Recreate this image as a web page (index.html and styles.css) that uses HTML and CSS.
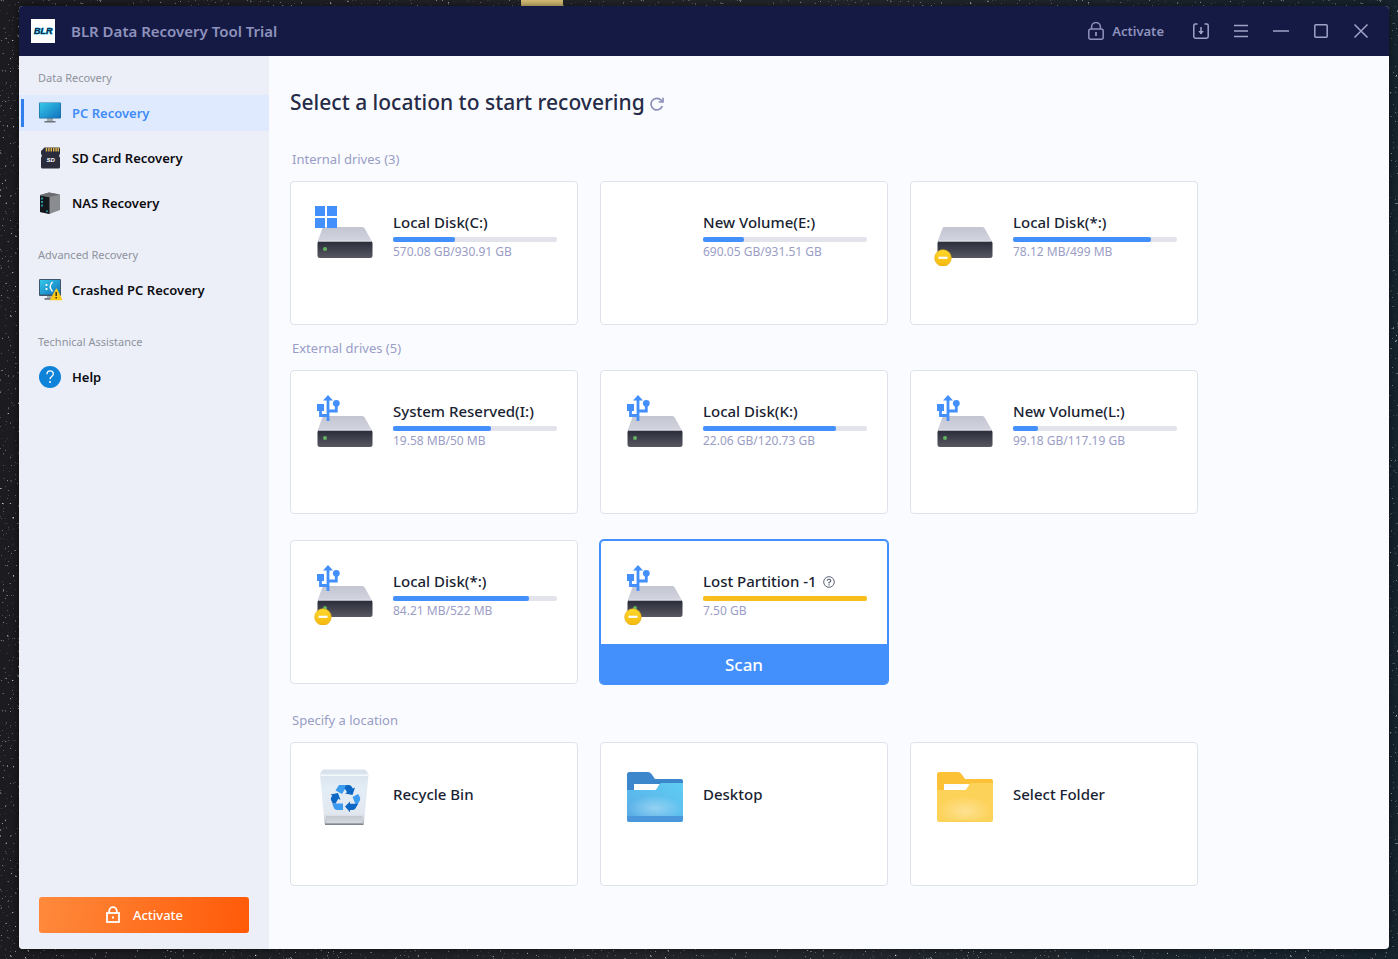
FILE: index.html
```html
<!DOCTYPE html>
<html lang="en">
<head>
    <meta charset="UTF-8">
    <meta name="viewport" content="width=device-width, initial-scale=1.0">
    <title>BLR Data Recovery Tool Trial</title>
    <link rel="stylesheet" href="styles.css">
</head>
<body>
    <!-- Desktop wallpaper -->
    <svg class="wallpaper" aria-hidden="true">
        <defs>
            <linearGradient id="sky" x1="0" y1="0" x2="1" y2="0">
                <stop offset="0" stop-color="#1c1c20"/>
                <stop offset="0.6" stop-color="#24272c"/>
                <stop offset="1" stop-color="#16232d"/>
            </linearGradient>
            <filter id="stars" x="0" y="0" width="100%" height="100%">
                <feTurbulence type="fractalNoise" baseFrequency="0.4" numOctaves="2" seed="8"/>
                <feColorMatrix values="0 0 0 0 0.7  0 0 0 0 0.72  0 0 0 0 0.76  5 0 0 0 -3.5"/>
            </filter>
        </defs>
        <rect width="100%" height="100%" fill="url(#sky)"/>
        <rect width="100%" height="100%" filter="url(#stars)"/>
        <rect x="521" width="42" height="6" fill="#dcc277"/>
    </svg>

    <!-- Shared icons -->
    <svg class="sprite" aria-hidden="true">
        <defs>
            <linearGradient id="driveTop" x1="0" y1="0" x2="0" y2="1">
                <stop offset="0" stop-color="#c3c5d1"/>
                <stop offset="1" stop-color="#d3d4df"/>
            </linearGradient>
            <linearGradient id="driveFront" x1="0" y1="0" x2="0" y2="1">
                <stop offset="0" stop-color="#292b3a"/>
                <stop offset="1" stop-color="#575861"/>
            </linearGradient>
            <linearGradient id="coin" x1="0" y1="0" x2="0" y2="1">
                <stop offset="0" stop-color="#ffd92b"/>
                <stop offset="1" stop-color="#f5b70d"/>
            </linearGradient>
            <linearGradient id="screen" x1="0" y1="0" x2="1" y2="1">
                <stop offset="0" stop-color="#35c8ea"/>
                <stop offset="1" stop-color="#1173bd"/>
            </linearGradient>
            <symbol id="drive" viewBox="0 0 64 64">
                <path d="M13.500 25h38q1.500 0 2.200 1.500L61 39.500H6.500L11.500 26.300q.5-1.300 2-1.300z" fill="url(#driveTop)"/>
                <rect x="6.500" y="39" width="55" height="17" rx="2.500" fill="url(#driveFront)"/>
                <path d="M8 39.200h52" stroke="#e8e8ee" stroke-width="1"/>
                <circle cx="14" cy="47" r="2" fill="#63b35f"/>
            </symbol>
            <symbol id="drivePlain" viewBox="0 0 64 64">
                <path d="M13.500 25h38q1.500 0 2.200 1.500L61 39.500H6.500L11.500 26.300q.5-1.300 2-1.300z" fill="url(#driveTop)"/>
                <rect x="6.500" y="39" width="55" height="17" rx="2.500" fill="url(#driveFront)"/>
                <path d="M8 39.200h52" stroke="#e8e8ee" stroke-width="1"/>
            </symbol>
            <symbol id="windows" viewBox="0 0 64 64">
                <path d="M4 4h10v10H4zM16 4h10v10H16zM4 16h10v10H4zM16 16h10v10H16z" fill="#4390fc"/>
            </symbol>
            <symbol id="usb" viewBox="0 0 64 64">
                <path d="M17 4l5 5.500H12z" fill="#4390fc"/>
                <rect x="6" y="13" width="7" height="7" fill="#4390fc"/>
                <circle cx="25.300" cy="12.300" r="3.400" fill="#4390fc"/>
                <path d="M17 8v22M9.500 19v5.500H17M25.300 14v6H17" fill="none" stroke="#4390fc" stroke-width="2.800"/>
            </symbol>
            <symbol id="minus" viewBox="0 0 64 64">
                <circle cx="12" cy="56" r="8.300" fill="url(#coin)" stroke="#e0a813" stroke-width=".6"/>
                <path d="M7.500 55.800h9" stroke="#fff" stroke-width="2.200"/>
            </symbol>
        </defs>
    </svg>

    <div class="window">
        <header class="titlebar">
            <svg class="logo" viewBox="0 0 24 24" aria-hidden="true">
                <rect width="24" height="24" fill="#fff"/>
                <text class="logo-glow" x="3" y="15">BLR</text>
                <text class="logo-text" x="3" y="15">BLR</text>
            </svg>
            <span class="app-title">BLR Data Recovery Tool Trial</span>
            <button class="activate-link" type="button">
                <svg width="16" height="18" viewBox="0 0 16 18" fill="none" stroke="currentColor" stroke-width="1.500">
                    <path d="M3.600 7V5a4.400 4.400 0 0 1 8.800 0v2"/>
                    <rect x=".8" y="7" width="14.400" height="10.200" rx="2"/>
                    <path d="M8 10v4" stroke-width="1.800"/>
                </svg>
                Activate
            </button>
            <button class="window-btn" type="button" aria-label="Import">
                <svg width="16" height="16" viewBox="0 0 16 16" fill="none" stroke="currentColor" stroke-width="1.500">
                    <path d="M4.500 1H2.300Q.8 1 .8 2.500v11q0 1.700 1.700 1.700h11q1.700 0 1.700-1.700v-11Q15.200 1 13.700 1h-2.200M8 4v7"/>
                    <path d="M5.200 8L8 11.500 10.800 8z" fill="currentColor" stroke="none"/>
                </svg>
            </button>
            <button class="window-btn" type="button" aria-label="Menu">
                <svg width="16" height="16" viewBox="0 0 16 16" fill="none" stroke="currentColor" stroke-width="1.500"><path d="M1 2.500h14M1 8h14M1 13.500h14"/></svg>
            </button>
            <button class="window-btn" type="button" aria-label="Minimize">
                <svg width="16" height="16" viewBox="0 0 16 16" fill="none" stroke="currentColor" stroke-width="1.500"><path d="M0 8h16"/></svg>
            </button>
            <button class="window-btn" type="button" aria-label="Maximize">
                <svg width="16" height="16" viewBox="0 0 16 16" fill="none" stroke="currentColor" stroke-width="1.500"><rect x="1.800" y="1.800" width="12.400" height="12.400" rx="1"/></svg>
            </button>
            <button class="window-btn" type="button" aria-label="Close">
                <svg width="16" height="16" viewBox="0 0 16 16" fill="none" stroke="currentColor" stroke-width="1.500"><path d="M1.500 1.500l13 13M14.500 1.500l-13 13"/></svg>
            </button>
        </header>

        <div class="content">
            <nav class="sidebar">
                <section class="nav-group">
                    <h2>Data Recovery</h2>
                    <a class="nav-item active" href="#">
                        <svg class="nav-icon" viewBox="0 0 22 22">
                            <path d="M8 16h6v3H8z" fill="#a3a8ae"/>
                            <path d="M5.500 19h11v1.500h-11z" fill="#6d747b"/>
                            <rect width="22" height="16" rx="1" y=".5" fill="#1b6f9c"/>
                            <rect x=".7" y="1" width="20.600" height="14.800" rx=".5" fill="url(#screen)"/>
                        </svg>
                        PC Recovery
                    </a>
                    <a class="nav-item" href="#">
                        <svg class="nav-icon" viewBox="0 0 22 22">
                            <path d="M5.500.5H20Q21 .5 21 1.500V7l-.7.7v2l.7.700V20q0 1.500-1.500 1.500h-16Q2 21.500 2 20V10.400l.7-.7v-2L2 7V4z" fill="#2a2c3c"/>
                            <path d="M7.500 .8v3.700M9.900 .8v3.700M12.300 .8v3.700M14.700 .8v3.700M17.100 .8v3.700M19.200 .8v3.700" stroke="#e4bd4e" stroke-width="1.400"/>
                            <text class="sd-text" x="7.500" y="15">SD</text>
                        </svg>
                        SD Card Recovery
                    </a>
                    <a class="nav-item" href="#">
                        <svg class="nav-icon" viewBox="0 0 22 22">
                            <path d="M1 3l9-2.500 11 2v15.500l-10.500 4L1 20z" fill="#8b8c90"/>
                            <path d="M1 3l9-2.500 11 2-10.500 2.500z" fill="#6b6c71"/>
                            <path d="M1 3.500l9.500 1.800V22L1 20z" fill="#14171c"/>
                            <path d="M3 5.500v2M3 9v2M3 12.500v2" stroke="#2fc4d6" stroke-width="1.400"/>
                            <path d="M8 18.500v1.500" stroke="#2fc4d6" stroke-width="1.400"/>
                        </svg>
                        NAS Recovery
                    </a>
                </section>

                <section class="nav-group">
                    <h2>Advanced Recovery</h2>
                    <a class="nav-item" href="#">
                        <svg class="nav-icon" viewBox="0 0 22 22">
                            <path d="M8 17h6v2H8z" fill="#a3a8ae"/>
                            <path d="M5.500 19.200H14v1.500H5.500z" fill="#5d646b"/>
                            <rect width="22" height="17" rx="1" fill="#40566a"/>
                            <rect x="1" y="1" width="20" height="14.500" fill="url(#screen)"/>
                            <path d="M7.500 5v2M7.500 9v2" stroke="#fff" stroke-width="1.800"/>
                            <path d="M13.500 3q-4.500 4.500 0 9.500" fill="none" stroke="#fff" stroke-width="1.400"/>
                            <path d="M16.800 10q.7-.8 1.400 0L23 20q.2 1.200-1 1.200H12q-1.200-.2-.7-1.200z" fill="#fcc916"/>
                            <path d="M17.200 13v4M17.200 18v1.600" stroke="#3b3518" stroke-width="1.500"/>
                        </svg>
                        Crashed PC Recovery
                    </a>
                </section>

                <section class="nav-group">
                    <h2>Technical Assistance</h2>
                    <a class="nav-item" href="#">
                        <svg class="nav-icon" viewBox="0 0 22 22">
                            <circle cx="11" cy="11" r="11" fill="#0f83d8"/>
                            <path d="M8 8.300q0-3.500 3.200-3.500 3.100 0 3.100 2.900 0 1.500-1.600 2.700Q11 11.700 11 13.300" fill="none" stroke="#fff" stroke-width="1.300"/>
                            <circle cx="11" cy="16" r="1" fill="#fff"/>
                        </svg>
                        Help
                    </a>
                </section>

                <button class="activate-btn" type="button">
                    <svg width="16" height="18" viewBox="0 0 16 18" fill="none" stroke="#fff" stroke-width="1.800">
                        <path d="M4.200 7V5a3.800 3.800 0 0 1 7.600 0v2"/>
                        <rect x="2" y="7" width="12" height="9"/>
                        <path d="M7 11.500h2"/>
                    </svg>
                    Activate
                </button>
            </nav>

            <main class="main">
                <div class="page-head">
                    <h1>Select a location to start recovering</h1>
                    <button class="refresh" type="button" aria-label="Refresh">
                        <svg width="14" height="14" viewBox="0 0 14 14" fill="none" stroke="currentColor" stroke-width="1.700">
                            <path d="M12.300 9A5.800 5.800 0 1 1 11.200 3.300L12.500 5"/>
                            <path d="M13 .8V5H8.700"/>
                        </svg>
                    </button>
                </div>

                <section class="drives">
                    <h3>Internal drives (3)</h3>
                    <div class="cards">
                        <article class="card">
                            <div class="card-body">
                                <svg class="drive-icon"><use href="#drive"/><use href="#windows"/></svg>
                                <div class="drive-info">
                                    <h4>Local Disk(C:)</h4>
                                    <div class="bar"><div class="fill" style="width: 38%"></div></div>
                                    <p>570.08 GB/930.91 GB</p>
                                </div>
                            </div>
                        </article>
                        <article class="card">
                            <div class="card-body">
                                <div class="drive-icon"></div>
                                <div class="drive-info">
                                    <h4>New Volume(E:)</h4>
                                    <div class="bar"><div class="fill" style="width: 25%"></div></div>
                                    <p>690.05 GB/931.51 GB</p>
                                </div>
                            </div>
                        </article>
                        <article class="card">
                            <div class="card-body">
                                <svg class="drive-icon"><use href="#drivePlain"/><use href="#minus"/></svg>
                                <div class="drive-info">
                                    <h4>Local Disk(*:)</h4>
                                    <div class="bar"><div class="fill" style="width: 84%"></div></div>
                                    <p>78.12 MB/499 MB</p>
                                </div>
                            </div>
                        </article>
                    </div>
                </section>

                <section class="drives external">
                    <h3>External drives (5)</h3>
                    <div class="cards">
                        <article class="card">
                            <div class="card-body">
                                <svg class="drive-icon"><use href="#drive"/><use href="#usb"/></svg>
                                <div class="drive-info">
                                    <h4>System Reserved(I:)</h4>
                                    <div class="bar"><div class="fill" style="width: 60%"></div></div>
                                    <p>19.58 MB/50 MB</p>
                                </div>
                            </div>
                        </article>
                        <article class="card">
                            <div class="card-body">
                                <svg class="drive-icon"><use href="#drive"/><use href="#usb"/></svg>
                                <div class="drive-info">
                                    <h4>Local Disk(K:)</h4>
                                    <div class="bar"><div class="fill" style="width: 81%"></div></div>
                                    <p>22.06 GB/120.73 GB</p>
                                </div>
                            </div>
                        </article>
                        <article class="card">
                            <div class="card-body">
                                <svg class="drive-icon"><use href="#drive"/><use href="#usb"/></svg>
                                <div class="drive-info">
                                    <h4>New Volume(L:)</h4>
                                    <div class="bar"><div class="fill" style="width: 15%"></div></div>
                                    <p>99.18 GB/117.19 GB</p>
                                </div>
                            </div>
                        </article>
                        <article class="card">
                            <div class="card-body">
                                <svg class="drive-icon"><use href="#drive"/><use href="#usb"/><use href="#minus"/></svg>
                                <div class="drive-info">
                                    <h4>Local Disk(*:)</h4>
                                    <div class="bar"><div class="fill" style="width: 83%"></div></div>
                                    <p>84.21 MB/522 MB</p>
                                </div>
                            </div>
                        </article>
                        <article class="card selected">
                            <div class="card-body">
                                <svg class="drive-icon"><use href="#drive"/><use href="#usb"/><use href="#minus"/></svg>
                                <div class="drive-info">
                                    <h4>Lost Partition -1
                                        <svg class="hint" width="12" height="12" viewBox="0 0 12 12" fill="none" stroke="#4b5168">
                                            <circle cx="6" cy="6" r="5.300" stroke-width=".9"/>
                                            <path d="M4.200 4.800Q4.300 3.200 6 3.200t1.800 1.500Q7.800 5.600 6 6.600v.8M6 8.200v1.200" stroke-width="1.100"/>
                                        </svg>
                                    </h4>
                                    <div class="bar"><div class="fill lost" style="width: 100%"></div></div>
                                    <p>7.50 GB</p>
                                </div>
                            </div>
                            <button class="scan-btn" type="button">Scan</button>
                        </article>
                    </div>
                </section>

                <section class="drives">
                    <h3>Specify a location</h3>
                    <div class="cards">
                        <a class="card" href="#">
                            <div class="card-body place">
                                <svg class="drive-icon" viewBox="0 0 64 64">
                                    <defs>
                                        <linearGradient id="bin" x1="0" y1="0" x2="0" y2="1">
                                            <stop offset="0" stop-color="#d6e1eb"/>
                                            <stop offset="0.35" stop-color="#e3edf6"/>
                                            <stop offset="0.8" stop-color="#e2e7ef"/>
                                            <stop offset="1" stop-color="#b4bac2"/>
                                        </linearGradient>
                                        <linearGradient id="binBase" x1="0" y1="0" x2="0" y2="1">
                                            <stop offset="0" stop-color="#c3c8d0"/>
                                            <stop offset="1" stop-color="#d5d9df"/>
                                        </linearGradient>
                                    </defs>
                                    <path d="M13 6.500h40q2 0 2.500 1.500l2 3.500L53 60q0 2-2 2H15.500q-2 0-2-2L9 11.500 10.500 8Q11 6.500 13 6.500z" fill="url(#bin)"/>
                                    <path d="M9.500 12.300h47.500" stroke="#f5f9fc" stroke-width="1.400"/>
                                    <path d="M15 53h36.500l-.8 7H15.500z" fill="url(#binBase)"/>
                                    <path d="M14 61.300h38.500" stroke="#7f858c" stroke-width="1.600"/>
                                    <!-- recycling arrows -->
                                    <path d="M28 22h8.500L31 31l-6.500-3.500z" fill="#3b9bf0"/>
                                    <path d="M35.500 22h2.500q1.800 0 2.800 1.800l1 1.700 2.200-1-2.500 7.500-7.500-1.500 2-1.200-2.500-4.300z" fill="#0d67c4"/>
                                    <path d="M41.500 34l5.500-3 1.800 3q.9 1.800 0 3.600L46 42.500h-1z" fill="#3b9bf0"/>
                                    <path d="M34 43.500l5-5v2.300h8l-2.400 4.400q-1 1.800-3 1.800H39v2.300z" fill="#0d67c4"/>
                                    <path d="M20.500 38.500l1 2H32V47h-6q-2 0-3-1.800z" fill="#3b9bf0"/>
                                    <path d="M19.500 31.500l7.500-1.500 2.500 7-2.200-1.200-2.700 4.700h-2.800l-1.700-3.200q-.7-1.600.2-3l.9-1.700z" fill="#0d67c4"/>
                                </svg>
                                <h4>Recycle Bin</h4>
                            </div>
                        </a>
                        <a class="card" href="#">
                            <div class="card-body place">
                                <svg class="drive-icon" viewBox="0 0 64 64">
                                    <defs>
                                        <linearGradient id="blueFolder" x1="1" y1="0" x2="0" y2="1">
                                            <stop offset="0" stop-color="#5fcdf3"/>
                                            <stop offset="1" stop-color="#58aae6"/>
                                        </linearGradient>
                                        <radialGradient id="shine" cx=".5" cy=".7" r=".5">
                                            <stop offset="0" stop-color="#fff" stop-opacity=".35"/>
                                            <stop offset="1" stop-color="#fff" stop-opacity="0"/>
                                        </radialGradient>
                                    </defs>
                                    <path d="M8.500 9H27q2 0 3.500 2l3.500 5h26q2 0 2 2v15H6V11.500Q6 9 8.500 9z" fill="#3c86cb"/>
                                    <path d="M13 21h26v8H13z" fill="#fff"/>
                                    <path d="M6 27h27.500q1.500 0 2.300-1.500l2.400-4q.8-1.500 2.300-1.500H62v36.500q0 2.500-2.500 2.500h-51Q6 59 6 56.500z" fill="url(#blueFolder)"/>
                                    <path d="M6 27h56v26H6z" fill="url(#shine)"/>
                                    <path d="M6 53h56v3.500q0 2.500-2.500 2.500h-51Q6 59 6 56.500z" fill="#4a97dc"/>
                                </svg>
                                <h4>Desktop</h4>
                            </div>
                        </a>
                        <a class="card" href="#">
                            <div class="card-body place">
                                <svg class="drive-icon" viewBox="0 0 64 64">
                                    <path d="M8.500 9H27q2 0 3.500 2l3.500 5h26q2 0 2 2v15H6V11.500Q6 9 8.500 9z" fill="#fcc136"/>
                                    <path d="M13 21h26v8H13z" fill="#fff"/>
                                    <path d="M6 27h27.500q1.500 0 2.300-1.500l2.400-4q.8-1.500 2.300-1.500H62v36.500q0 2.500-2.500 2.500h-51Q6 59 6 56.500z" fill="#fdd258"/>
                                    <path d="M6 27h56v30H6z" fill="url(#shine)"/>
                                </svg>
                                <h4>Select Folder</h4>
                            </div>
                        </a>
                    </div>
                </section>
            </main>
        </div>
    </div>
</body>
</html>
```
FILE: styles.css
```css
* { box-sizing: border-box; }

body {
    font-family: 'Noto Sans', 'Open Sans', sans-serif;
    margin: 0;
    padding: 6px 9px 10px 19px;
    min-height: 100vh;
    display: flex;
    background: #1c1f24;
    position: relative;
}

h1, h2, h3, h4, p { margin: 0; }

a {
    color: inherit;
    text-decoration: none;
}

button {
    font-family: inherit;
    border: none;
    padding: 0;
    background: none;
    cursor: pointer;
}

.wallpaper {
    position: absolute;
    top: 0;
    left: 0;
    width: 100%;
    height: 100%;
}

.sprite {
    position: absolute;
    width: 0;
    height: 0;
}

.window {
    position: relative;
    flex: 1;
    display: flex;
    flex-direction: column;
    border-radius: 4px;
    overflow: hidden;
    background: #f9fbff;
    box-shadow: 0 0 8px rgba(0,0,0,0.6);
}

/* Title bar */
.titlebar {
    height: 50px;
    padding: 0 8px 0 12px;
    display: flex;
    align-items: center;
    background: #141a44;
    color: #8f92bd;
}

.logo {
    width: 24px;
    height: 24px;
    margin-right: 16px;
}

.logo-text,
.logo-glow {
    font-family: 'Liberation Sans', sans-serif;
    font-size: 9px;
    font-weight: bold;
    font-style: italic;
}

.logo-text { fill: #0d2c4e; }

.logo-glow {
    stroke: #3fc3e6;
    stroke-width: 1px;
}

.app-title {
    flex: 1;
    font-size: 15px;
    font-weight: 600;
}

.activate-link {
    display: flex;
    align-items: center;
    gap: 8px;
    margin-right: 17px;
    color: inherit;
    font-size: 13px;
    font-weight: 600;
}

.window-btn {
    width: 40px;
    height: 40px;
    display: flex;
    align-items: center;
    justify-content: center;
    color: #a0a3c8;
}

.content {
    flex: 1;
    display: flex;
}

/* Sidebar */
.sidebar {
    width: 250px;
    padding: 13px 0 16px;
    display: flex;
    flex-direction: column;
    gap: 25px;
    background: #eceff8;
}

.nav-group {
    display: flex;
    flex-direction: column;
    gap: 9px;
}

.nav-group h2 {
    padding-left: 19px;
    font-size: 11px;
    line-height: 17px;
    font-weight: 400;
    color: #8e929c;
}

.nav-item {
    position: relative;
    height: 36px;
    padding-left: 20px;
    display: flex;
    align-items: center;
    gap: 11px;
    font-size: 13px;
    font-weight: 600;
    color: #0b0c10;
}

.nav-item.active {
    background: #e0eaff;
    color: #3f8cf5;
}

.nav-item.active::before {
    content: '';
    position: absolute;
    left: 2px;
    top: 4px;
    width: 3px;
    height: 28px;
    background: #2f80ed;
}

.nav-icon {
    width: 22px;
    height: 22px;
    overflow: visible;
}

.sd-text {
    font-family: 'Liberation Sans', sans-serif;
    font-size: 6px;
    font-weight: bold;
    font-style: italic;
    fill: #fff;
}

.activate-btn {
    height: 36px;
    margin: auto 20px 0;
    display: flex;
    align-items: center;
    justify-content: center;
    gap: 12px;
    border-radius: 3px;
    background: linear-gradient(100deg, #ff8a3c, #ff5a08);
    color: #fff;
    font-size: 13px;
    font-weight: 500;
}

/* Main area */
.main {
    flex: 1;
    padding: 32px 20px 0 21px;
}

.page-head {
    display: flex;
    align-items: center;
    gap: 5px;
    margin-bottom: 33px;
}

.page-head h1 {
    font-size: 21px;
    line-height: 28px;
    font-weight: 500;
    color: #262b47;
}

.refresh {
    display: flex;
    padding-top: 4px;
    color: #8d90b8;
}

.drives { margin-bottom: 13px; }

.drives.external { margin-bottom: 26px; }

.drives h3 {
    padding-left: 2px;
    margin-bottom: 12px;
    font-size: 13px;
    line-height: 20px;
    font-weight: 400;
    color: #9a9dc6;
}

.cards {
    display: grid;
    grid-template-columns: repeat(auto-fill, 288px);
    gap: 26px 22px;
}

.card {
    min-height: 144px;
    display: flex;
    flex-direction: column;
    border: 1px solid #dfe2ec;
    border-radius: 4px;
    background: #fff;
}

.card-body {
    flex: 1;
    display: flex;
    align-items: flex-start;
    gap: 18px;
    padding: 20px 20px 0;
}

.card-body.place h4 {
    line-height: 62px;
}

.drive-icon {
    width: 64px;
    height: 64px;
    flex-shrink: 0;
}

.drive-info {
    flex: 1;
    padding-top: 10px;
}

.card h4 {
    font-size: 15px;
    line-height: 20px;
    font-weight: 500;
    color: #1a1f33;
}

.hint {
    margin-left: 2px;
    vertical-align: -1px;
}

.bar {
    height: 5px;
    margin: 5px 0 2px;
    border-radius: 2px;
    background: #e3e4eb;
}

.fill {
    height: 100%;
    border-radius: 2px;
    background: #4390fc;
}

.fill.lost { background: #f8bf1c; }

.drive-info p {
    font-size: 12px;
    line-height: 16px;
    color: #9a9dc6;
}

.card.selected {
    border-color: #4390fc;
    box-shadow: 0 0 0 1px #4390fc;
}

.scan-btn {
    height: 39px;
    padding-top: 2px;
    background: #4390fc;
    color: #fff;
    font-size: 17px;
    font-weight: 500;
}
```
